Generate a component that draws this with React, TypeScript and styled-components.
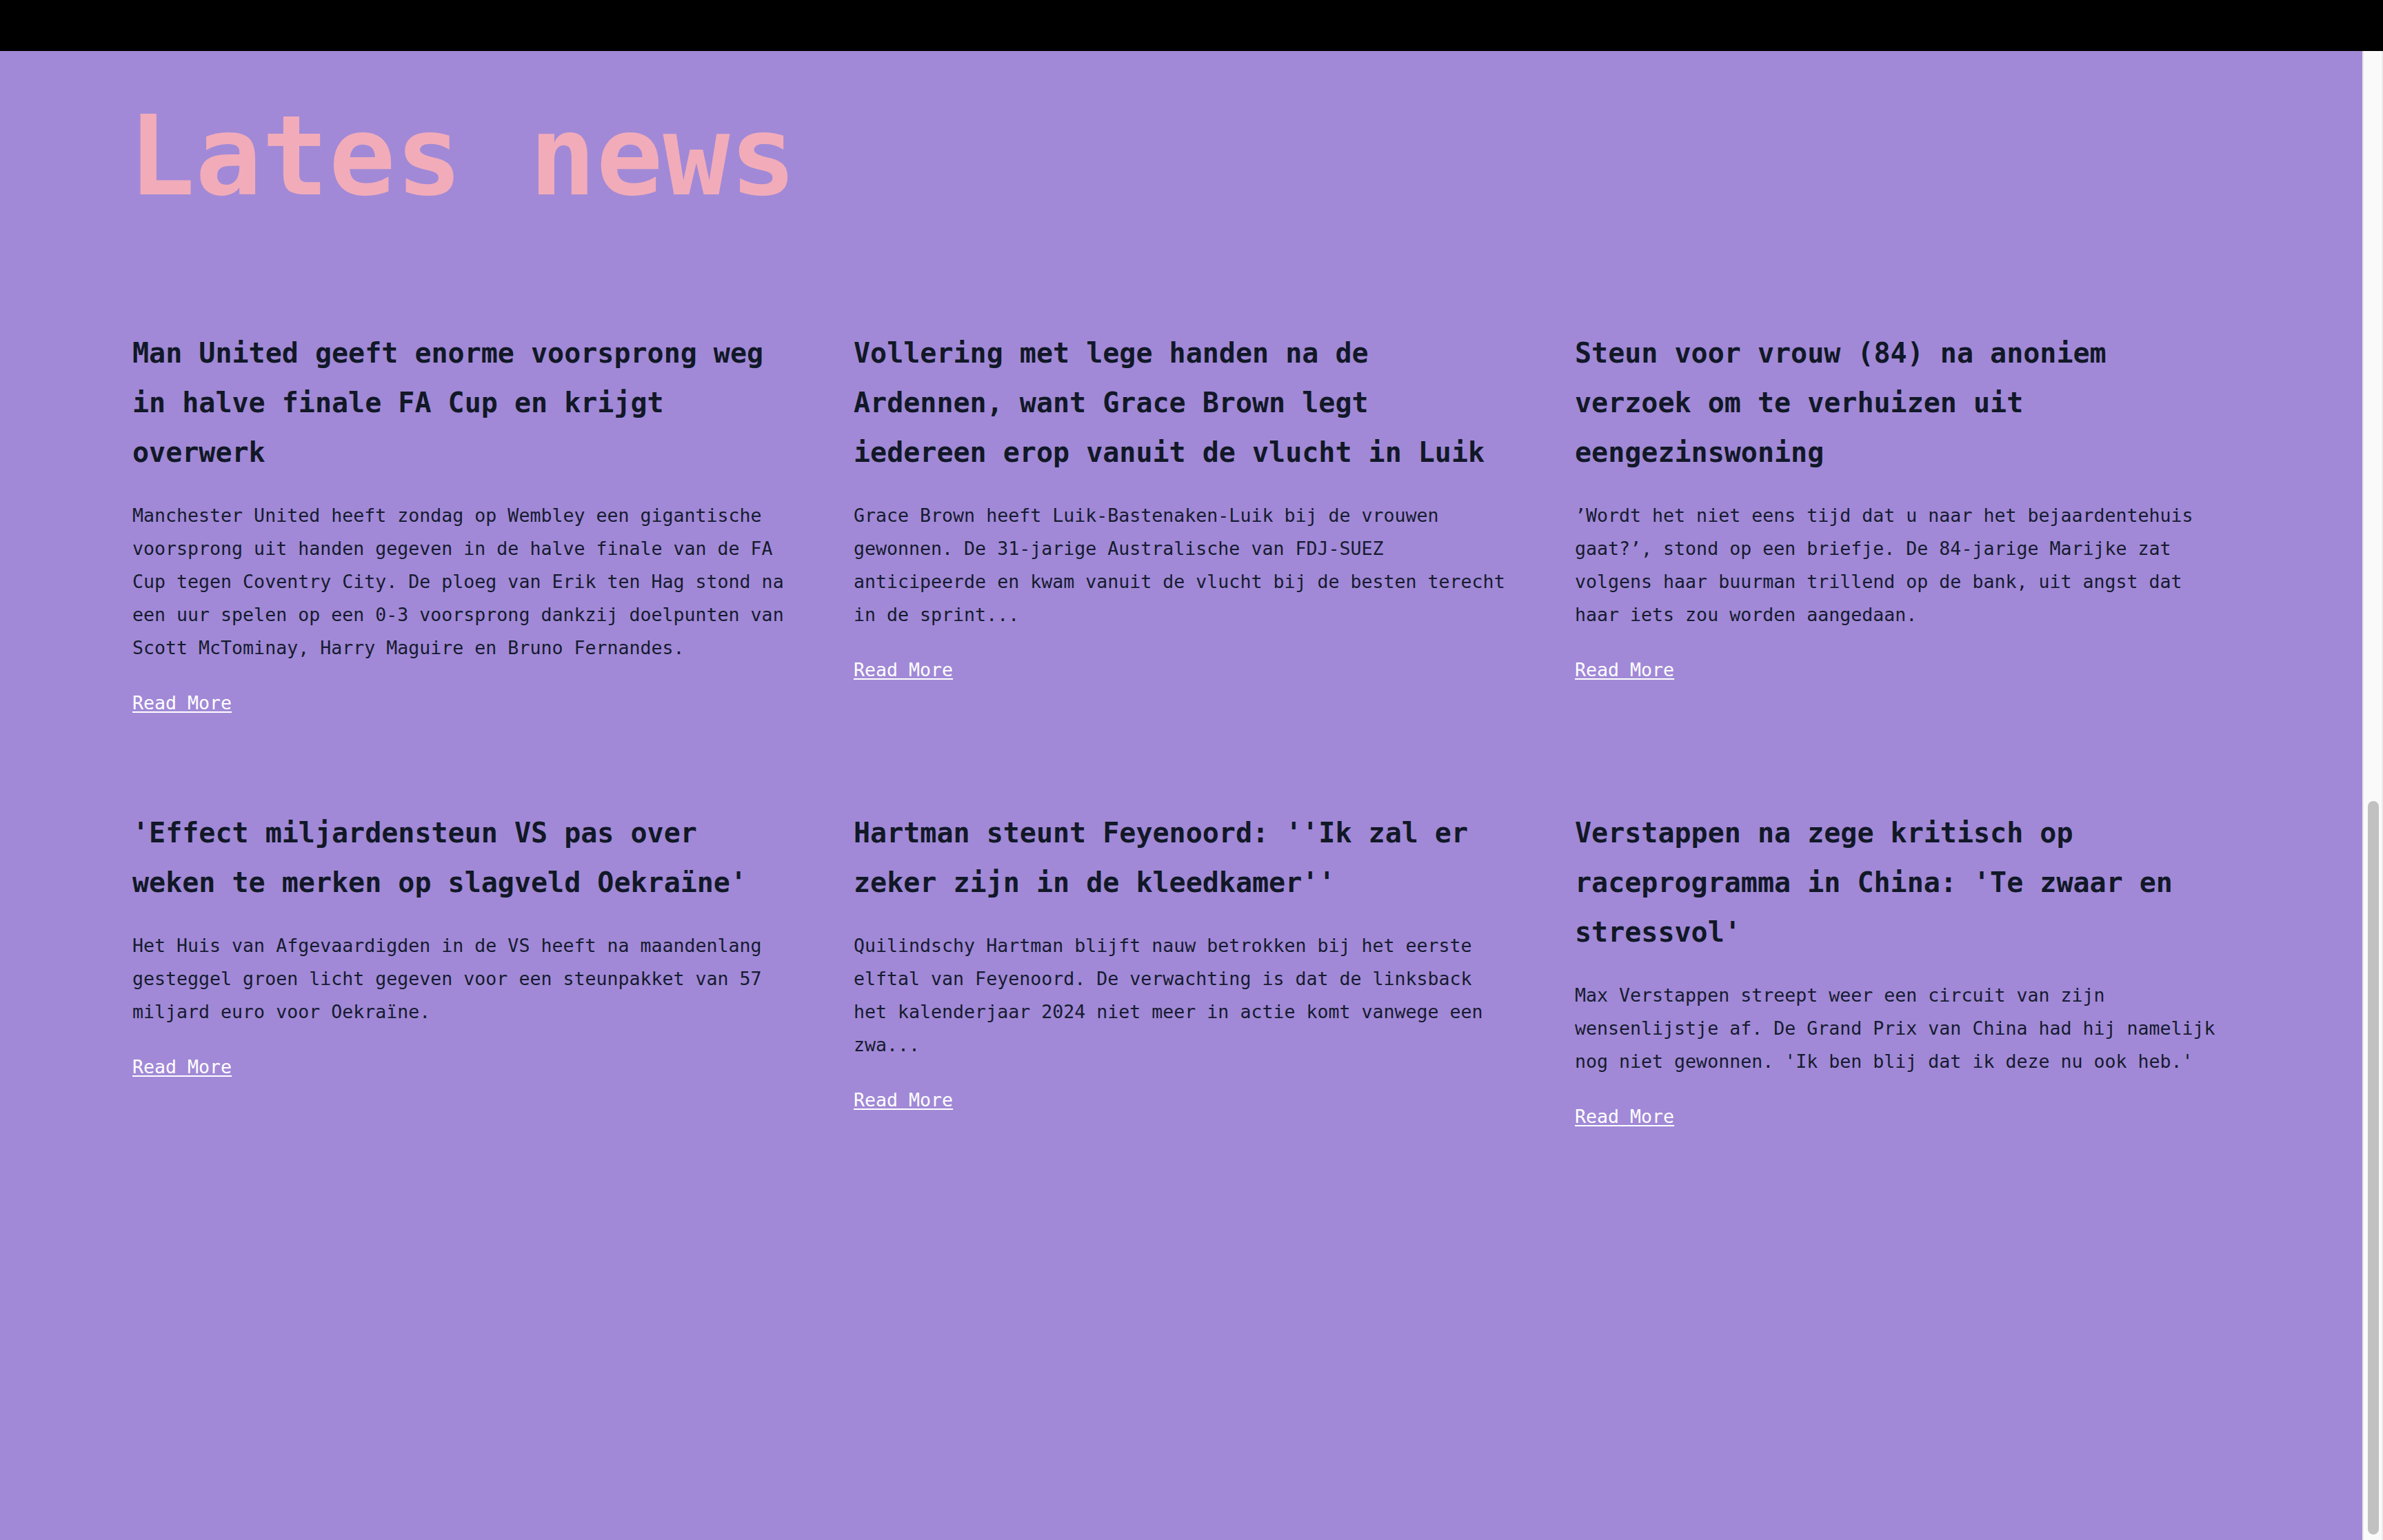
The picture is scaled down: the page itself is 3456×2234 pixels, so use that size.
import { useLayoutEffect, useRef, useState } from 'react';
import styled, { createGlobalStyle } from 'styled-components';

const GlobalStyle = createGlobalStyle`
  html,
  body {
    margin: 0;
    height: 100%;
    overflow: hidden;
    background: #000;
  }

  #root {
    height: 100%;
  }
`;

const Shell = styled.div`
  display: flex;
  flex-direction: column;
  height: 100vh;
  font-family: 'DejaVu Sans Mono', 'Liberation Mono', monospace;
`;

const TopBar = styled.header`
  flex-shrink: 0;
  height: 74px;
  background: #000;
`;

const ScrollArea = styled.div`
  flex: 1;
  min-height: 0;
  display: flex;
`;

const Viewport = styled.main`
  flex: 1;
  overflow-y: auto;
  scrollbar-width: none;
  background: #a189d7;
`;

// classic (non-overlay) scrollbar, drawn beside the page
const ScrollRail = styled.div`
  flex-shrink: 0;
  width: 30px;
  box-sizing: border-box;
  padding: 8px 4px 8px 6px;
  display: flex;
  flex-direction: column;
  background: #fafafa;
  border-left: 2px solid #e8e8e8;
  border-right: 2px solid #ececec;
`;

const ScrollThumb = styled.div`
  width: 16px;
  border-radius: 8px;
  background: #c1c1c1;
`;

// the part of the page above the news, scrolled out of view
const Hero = styled.section`
  height: 2121px;
`;

const NewsSection = styled.section`
  padding: 96px 192px 590px;
`;

const Title = styled.h1`
  margin: 0 0 0 -6px;
  font-size: 161px;
  line-height: 191.4px;
  font-weight: 700;
  color: #f2acb9;
`;

const NewsGrid = styled.div`
  margin-top: 154px;
  display: grid;
  grid-template-columns: repeat(3, 950px);
  column-gap: 96px;
  row-gap: 128px;
  align-items: start;
`;

const Article = styled.article`
  display: flex;
  flex-direction: column;
  gap: 32px;
`;

const Headline = styled.h2`
  margin: 0;
  font-size: 40px;
  line-height: 72px;
  font-weight: 700;
  color: #111827;
`;

const Summary = styled.p`
  margin: 0;
  font-size: 26.6px;
  line-height: 48px;
  color: #161b30;
`;

const ReadMore = styled.div`
  font-size: 26.6px;
  line-height: 48px;

  a {
    color: #fff;
    text-decoration: underline;
    text-decoration-thickness: 2px;
    text-underline-offset: 3px;
  }
`;

interface INews {
  id: number;
  title: string;
  summary: string;
}

const news: INews[] = [
  {
    id: 1,
    title: 'Man United geeft enorme voorsprong weg in halve finale FA Cup en krijgt overwerk',
    summary:
      'Manchester United heeft zondag op Wembley een gigantische voorsprong uit handen gegeven in de halve finale van de FA Cup tegen Coventry City. De ploeg van Erik ten Hag stond na een uur spelen op een 0-3 voorsprong dankzij doelpunten van Scott McTominay, Harry Maguire en Bruno Fernandes.',
  },
  {
    id: 2,
    title: 'Vollering met lege handen na de Ardennen, want Grace Brown legt iedereen erop vanuit de vlucht in Luik',
    summary:
      'Grace Brown heeft Luik-Bastenaken-Luik bij de vrouwen gewonnen. De 31-jarige Australische van FDJ-SUEZ anticipeerde en kwam vanuit de vlucht bij de besten terecht in de sprint...',
  },
  {
    id: 3,
    title: 'Steun voor vrouw (84) na anoniem verzoek om te verhuizen uit eengezinswoning',
    summary:
      '’Wordt het niet eens tijd dat u naar het bejaardentehuis gaat?’, stond op een briefje. De 84-jarige Marijke zat volgens haar buurman trillend op de bank, uit angst dat haar iets zou worden aangedaan.',
  },
  {
    id: 4,
    title: "'Effect miljardensteun VS pas over weken te merken op slagveld Oekraïne'",
    summary:
      'Het Huis van Afgevaardigden in de VS heeft na maandenlang gesteggel groen licht gegeven voor een steunpakket van 57 miljard euro voor Oekraïne.',
  },
  {
    id: 5,
    title: "Hartman steunt Feyenoord: ''Ik zal er zeker zijn in de kleedkamer''",
    summary:
      'Quilindschy Hartman blijft nauw betrokken bij het eerste elftal van Feyenoord. De verwachting is dat de linksback het kalenderjaar 2024 niet meer in actie komt vanwege een zwa...',
  },
  {
    id: 6,
    title: "Verstappen na zege kritisch op raceprogramma in China: 'Te zwaar en stressvol'",
    summary:
      "Max Verstappen streept weer een circuit van zijn wensenlijstje af. De Grand Prix van China had hij namelijk nog niet gewonnen. 'Ik ben blij dat ik deze nu ook heb.'",
  },
];

function NewsCard({ title, summary }: INews) {
  return (
    <Article>
      <Headline>{title}</Headline>
      <Summary>{summary}</Summary>
      <ReadMore>
        <a href="#">Read More</a>
      </ReadMore>
    </Article>
  );
}

function App() {
  const viewportRef = useRef<HTMLElement>(null);
  const [thumb, setThumb] = useState({ top: 0, height: 0 });

  // the screenshot shows the page scrolled all the way down
  useLayoutEffect(() => {
    const el = viewportRef.current;
    if (!el) return;
    el.scrollTop = el.scrollHeight;
    const ratio = el.clientHeight / el.scrollHeight;
    const box = el.clientHeight * ratio;
    const maxScroll = el.scrollHeight - el.clientHeight;
    const top = maxScroll > 0 ? (el.scrollTop / maxScroll) * (el.clientHeight - box) : 0;
    setThumb({ top, height: box - 16 });
  }, []);

  return (
    <Shell>
      <GlobalStyle />
      <TopBar />
      <ScrollArea>
        <Viewport ref={viewportRef}>
          <Hero />
          <NewsSection>
            <Title>Lates news</Title>
            <NewsGrid>
              {news.map((item) => (
                <NewsCard key={item.id} {...item} />
              ))}
            </NewsGrid>
          </NewsSection>
        </Viewport>
        <ScrollRail>
          <ScrollThumb style={{ marginTop: thumb.top, height: thumb.height }} />
        </ScrollRail>
      </ScrollArea>
    </Shell>
  );
}

export default App;
